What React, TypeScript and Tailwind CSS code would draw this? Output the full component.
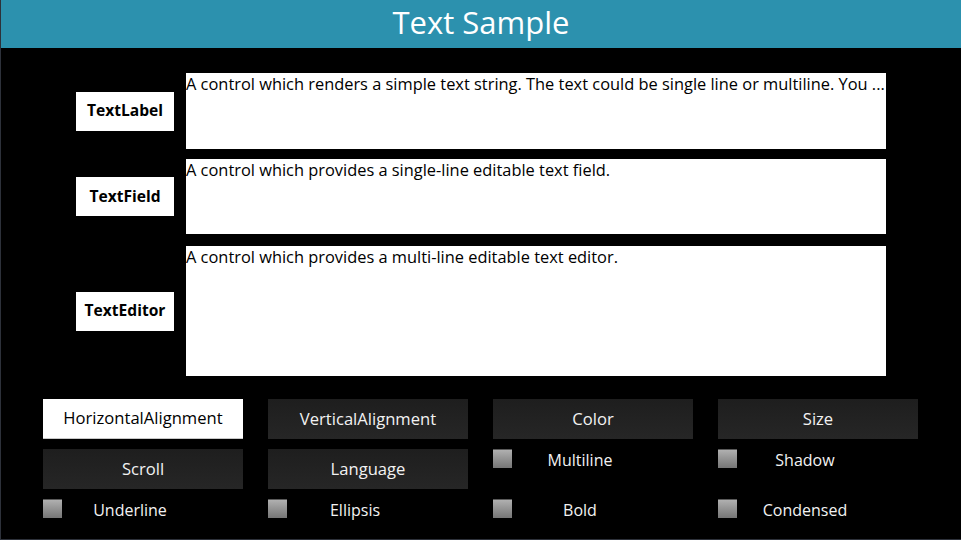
import React from 'react';

const ROWS = [
  {
    label: 'TextLabel',
    text: 'A control which renders a simple text string. The text could be single line or multiline. You ...',
    h: 'h-[76px]',
  },
  {
    label: 'TextField',
    text: 'A control which provides a single-line editable text field.',
    h: 'h-[75px]',
  },
  {
    label: 'TextEditor',
    text: 'A control which provides a multi-line editable text editor.',
    h: 'h-[130px]',
  },
];

function Btn({ label, active }: { label: string; active?: boolean }) {
  return (
    <div
      className={
        active
          ? 'h-[40px] w-[200px] flex items-center justify-center bg-white text-black border-b border-[#c8c8c8] text-[16.6px]'
          : 'h-[40px] w-[200px] flex items-center justify-center bg-gradient-to-b from-[#1e1e1e] to-[#262626] text-[#f2f2f2] text-[16.6px]'
      }
    >
      {label}
    </div>
  );
}

function Check({ label }: { label: string }) {
  return (
    <div className="h-[40px] w-[200px] flex items-start">
      <div className="w-[19px] h-[19px] bg-gradient-to-b from-[#b0b0b0] to-[#767676] border-t border-[#5a5a5a]" />
      <div className="w-[136px] text-center text-[16px] leading-[23px] text-[#f2f2f2]">{label}</div>
    </div>
  );
}

export default function App() {
  return (
    <div
      className="w-[961px] h-[540px] bg-black border-l border-b border-[#2d313a] overflow-hidden flex flex-col"
      style={{ fontFamily: '"Open Sans", "Noto Sans", sans-serif' }}
    >
      <div className="h-[48px] bg-[#2c91ae] flex items-center justify-center text-white text-[31px] leading-none pb-[4px] shrink-0">
        Text Sample
      </div>

      <div className="flex flex-col pl-[75px] pt-[25px]">
        {ROWS.map((r, i) => (
          <div
            key={r.label}
            className={`flex items-center gap-[12px] ${i === 1 ? 'mt-[10px]' : ''} ${i === 2 ? 'mt-[12px]' : ''}`}
          >
            <div className="w-[98px] h-[39px] bg-white flex items-center justify-center font-bold text-black text-[15.6px]">
              {r.label}
            </div>
            <div
              className={`w-[700px] ${r.h} bg-white text-black text-[16.4px] leading-[22px] whitespace-nowrap overflow-hidden`}
            >
              {r.text}
            </div>
          </div>
        ))}
      </div>

      <div className="pl-[42px] pt-[23px] grid grid-cols-[200px_200px_200px_200px] gap-x-[25px] gap-y-[10px]">
        <Btn label="HorizontalAlignment" active />
        <Btn label="VerticalAlignment" />
        <Btn label="Color" />
        <Btn label="Size" />
        <Btn label="Scroll" />
        <Btn label="Language" />
        <Check label="Multiline" />
        <Check label="Shadow" />
        <Check label="Underline" />
        <Check label="Ellipsis" />
        <Check label="Bold" />
        <Check label="Condensed" />
      </div>
    </div>
  );
}
